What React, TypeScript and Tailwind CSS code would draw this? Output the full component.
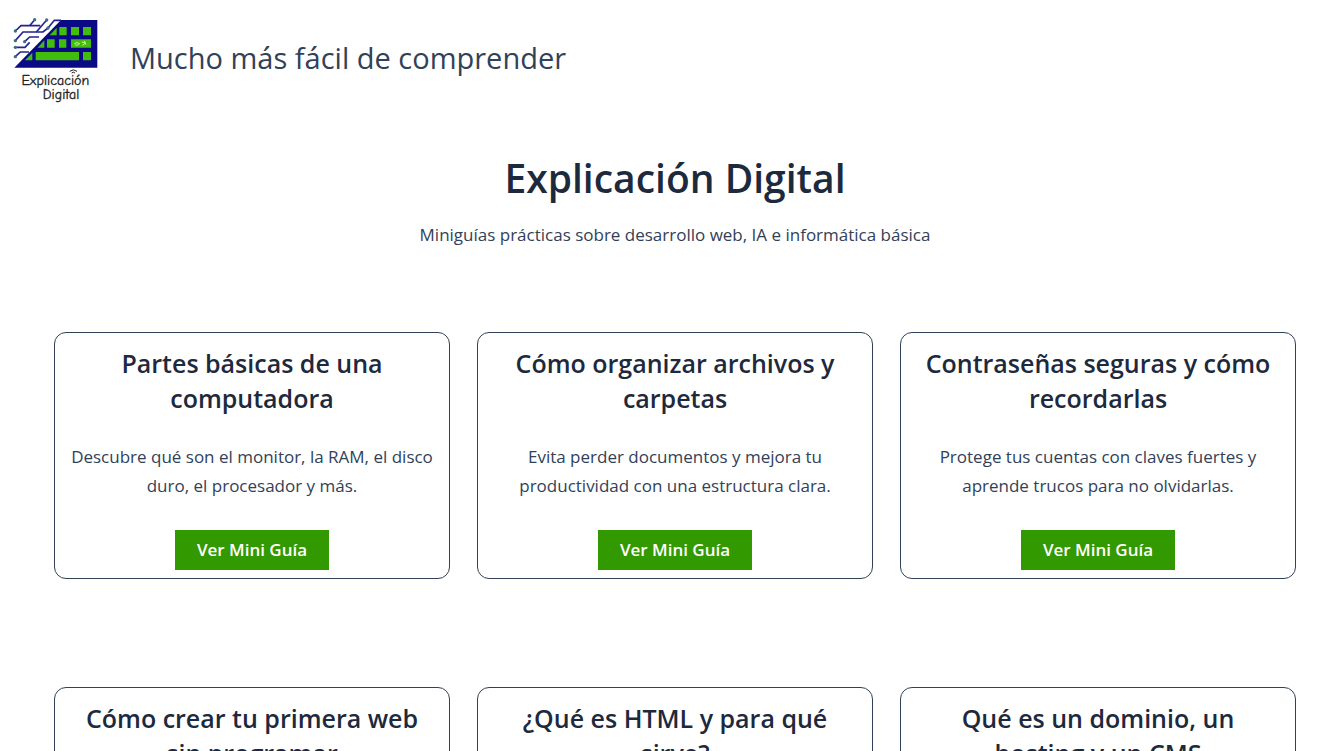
const GUIAS = [
  {
    title: "Partes básicas de una computadora",
    text: "Descubre qué son el monitor, la RAM, el disco duro, el procesador y más.",
    href: "#partes-computadora",
  },
  {
    title: "Cómo organizar archivos y carpetas",
    text: "Evita perder documentos y mejora tu productividad con una estructura clara.",
    href: "#organizar-archivos",
  },
  {
    title: "Contraseñas seguras y cómo recordarlas",
    text: "Protege tus cuentas con claves fuertes y aprende trucos para no olvidarlas.",
    href: "#contrasenas-seguras",
  },
  {
    title: "Cómo crear tu primera web sin programar",
    text: "Publica tu página paso a paso con herramientas visuales y gratuitas.",
    href: "#primera-web",
  },
  {
    title: "¿Qué es HTML y para qué sirve?",
    text: "Conoce el lenguaje con el que se construyen todas las páginas web.",
    href: "#que-es-html",
  },
  {
    title: "Qué es un dominio, un hosting y un CMS",
    text: "Entiende las tres piezas que necesitas para tener tu sitio en internet.",
    href: "#dominio-hosting-cms",
  },
];

function Logo() {
  return (
    <svg viewBox="0 0 300 300" className="size-[100px] shrink-0" role="img" aria-label="Explicación Digital">
      {/* Keyboard */}
      <path d="M168 30H277V173H28Z" fill="#0a0a87" />
      <g fill="#43bd0b">
        <path d="M155 53V76H134ZM163 51h22v25h-22ZM198 51h24v25h-24ZM234 51h24v25h-24Z" />
        <path d="M118 91V113H98ZM126 88h23v25h-23ZM162 88h22v25h-22ZM198 88h60v25h-60Z" />
        <path d="M82 128V151H60ZM92 126h130v25H92ZM234 126h24v25h-24Z" />
      </g>
      <path d="M208 101q8-7 16 0q-7 7-14 4M230 96l12 3-10 7M238 92l5 12" fill="none" stroke="#c8ef9a" strokeWidth="3" />

      {/* Circuit traces */}
      <g fill="none" stroke="#23238f" strokeWidth="5">
        <path d="M89 29 74 47" />
        <path d="M31 63 48 47H106" />
        <path d="M125 30 94 66" />
        <path d="M31 92 54 66H114L129 54" />
        <path d="M129 54 148 31H168" />
        <path d="M59 95 74 81H102" />
        <path d="M31 112H60L74 97" />
        <path d="M31 140 46 126H72" />
      </g>
      <g fill="#3b6f86">
        <circle cx="89" cy="29" r="5" />
        <circle cx="125" cy="30" r="5" />
        <circle cx="129" cy="54" r="5" />
        <circle cx="31" cy="63" r="5" />
        <circle cx="31" cy="92" r="5" />
        <circle cx="59" cy="95" r="5" />
        <circle cx="31" cy="112" r="5" />
        <circle cx="31" cy="140" r="5" />
      </g>

      <g className="font-['Comic_Neue','Open_Sans',sans-serif]" fill="#222" stroke="#222" strokeWidth="1" textAnchor="middle" fontSize="42">
        <text x="151" y="225">Explicación</text>
        <text x="168" y="267">Digital</text>
      </g>
      <path d="M194 184q11-9 22 0M200 189q5-5 10 0" fill="none" stroke="#222" strokeWidth="3" />
    </svg>
  );
}

function GuiaCard({ title, text, href }: { title: string; text: string; href: string }) {
  return (
    <article className="flex flex-col items-center rounded-xl border border-slate-700 px-[14px] pt-[13px] pb-2 text-center">
      <h2 className="text-[25px] leading-[35px] font-semibold text-slate-800">{title}</h2>
      <p className="mt-[26px] text-[17px] leading-[29px]">{text}</p>
      <a href={href} className="mt-[30px] bg-[#339900] px-[22px] text-[17px] leading-10 font-semibold text-white">
        Ver Mini Guía
      </a>
    </article>
  );
}

export default function App() {
  return (
    <div className="min-h-screen bg-white font-['Segoe_UI','Open_Sans',sans-serif] text-slate-700">
      <header className="flex items-center gap-[25px] pt-[10px] pl-[5px]">
        <Logo />
        <p className="pb-1 text-[29px] leading-10">Mucho más fácil de comprender</p>
      </header>

      <main className="pr-[39px] pb-16 pl-[54px]">
        <div className="pt-10 text-center">
          <h1 className="text-[39px] leading-[56px] font-semibold text-slate-800">Explicación Digital</h1>
          <p className="mt-[14px] text-[17px] leading-[29px]">
            Miniguías prácticas sobre desarrollo web, IA e informática básica
          </p>
        </div>

        <section className="mt-[83px] grid grid-cols-3 gap-x-[27px] gap-y-[108px]">
          {GUIAS.map((guia) => (
            <GuiaCard key={guia.href} {...guia} />
          ))}
        </section>
      </main>
    </div>
  );
}
